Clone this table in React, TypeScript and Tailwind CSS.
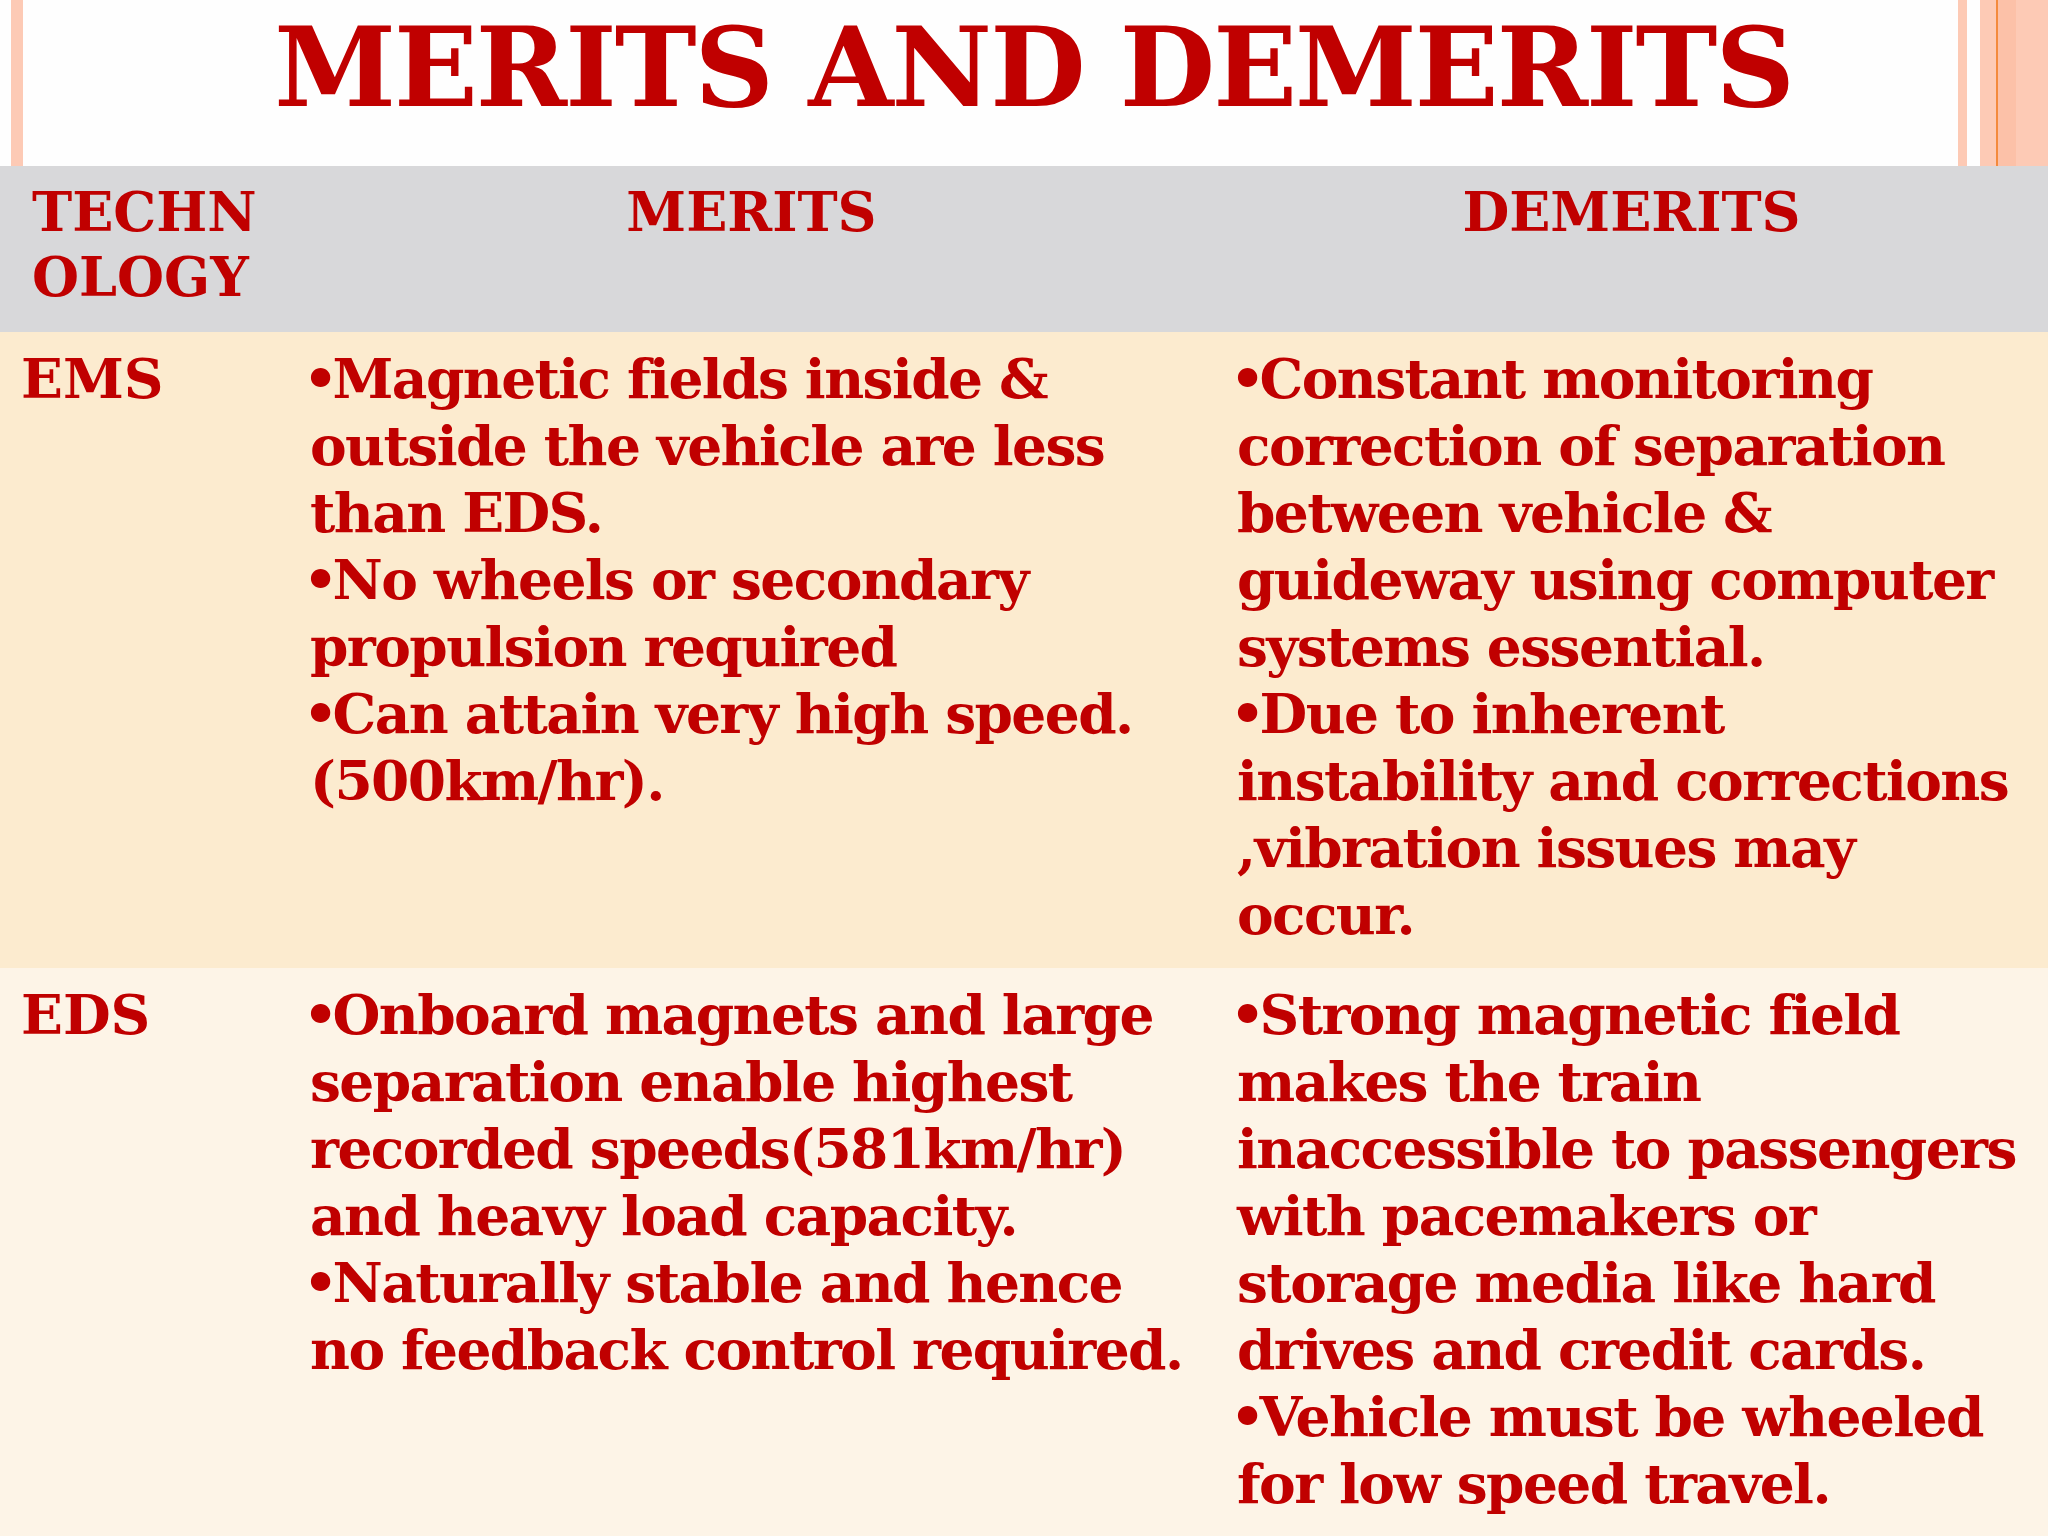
const red = "text-[#c00000]";

const emsMerits = [
  "•Magnetic fields inside &",
  "outside the vehicle are less",
  "than EDS.",
  "•No wheels or secondary",
  "propulsion required",
  "•Can attain very high speed.",
  "(500km/hr).",
];

const emsDemerits = [
  "•Constant monitoring",
  "correction of separation",
  "between vehicle &",
  "guideway using computer",
  "systems essential.",
  "•Due to inherent",
  "instability and corrections",
  ",vibration issues may",
  "occur.",
];

const edsMerits = [
  "•Onboard magnets and large",
  "separation enable highest",
  "recorded speeds(581km/hr)",
  "and heavy load capacity.",
  "•Naturally stable and hence",
  "no feedback control required.",
];

const edsDemerits = [
  "•Strong magnetic field",
  "makes the train",
  "inaccessible to passengers",
  "with pacemakers or",
  "storage media like hard",
  "drives and credit cards.",
  "•Vehicle must be wheeled",
  "for low speed travel.",
];

function Lines({ lines }: { lines: string[] }) {
  return (
    <div className="whitespace-nowrap tracking-[-1.6px]">
      {lines.map((l, i) =>
        l.startsWith("•") ? (
          <div key={i}>
            <span className="inline-block -ml-[7px] -mr-[4px]">•</span>
            {l.slice(1)}
          </div>
        ) : (
          <div key={i}>{l}</div>
        )
      )}
    </div>
  );
}

function Row({
  name,
  merits,
  demerits,
  bg,
  h,
}: {
  name: string;
  merits: string[];
  demerits: string[];
  bg: string;
  h: string;
}) {
  return (
    <div className={`grid grid-cols-[310px_927px_1fr] pt-[13px] text-[55px] leading-[67px] ${bg} ${h}`}>
      <div className="pl-[21px]">{name}</div>
      <Lines lines={merits} />
      <Lines lines={demerits} />
    </div>
  );
}

export default function App() {
  return (
    <div
      className={`w-[2048px] h-[1536px] overflow-hidden flex flex-col font-bold ${red}`}
      style={{ fontFamily: '"DejaVu Serif", "Liberation Serif", serif' }}
    >
      {/* title strip */}
      <div className="h-[166px] flex bg-[#fefefe]">
        <div className="ml-[11px] w-[12px] bg-[#fdcab5]" />
        <div className="flex-1 flex items-center justify-center pl-[86px] pb-[32px]">
          <h1 className="text-[110px] leading-[1.1] whitespace-nowrap tracking-[-2px]">MERITS AND DEMERITS</h1>
        </div>
        <div className="flex">
          <div className="w-[9px] bg-[#fdcab5]" />
          <div className="w-[13px]" />
          <div className="w-[16px] bg-[#fdcab5]" />
          <div className="w-[2px] bg-[#f48a3c]" />
          <div className="w-[18px] bg-[#fcc1a8]" />
          <div className="w-[32px] bg-[#fdcab5]" />
        </div>
      </div>

      {/* header row */}
      <div className="h-[166px] grid grid-cols-[310px_927px_1fr] bg-[#d8d8da] pt-[14px] text-[54px] leading-[65px]">
        <div className="pl-[32px]">
          <div>TECHN</div>
          <div>OLOGY</div>
        </div>
        <div className="text-center pr-[44px]">MERITS</div>
        <div className="text-center pr-[22px]">DEMERITS</div>
      </div>

      <Row name="EMS" merits={emsMerits} demerits={emsDemerits} bg="bg-[#fcebcf]" h="h-[636px]" />
      <Row name="EDS" merits={edsMerits} demerits={edsDemerits} bg="bg-[#fdf4e7] flex-1" h="" />
    </div>
  );
}
